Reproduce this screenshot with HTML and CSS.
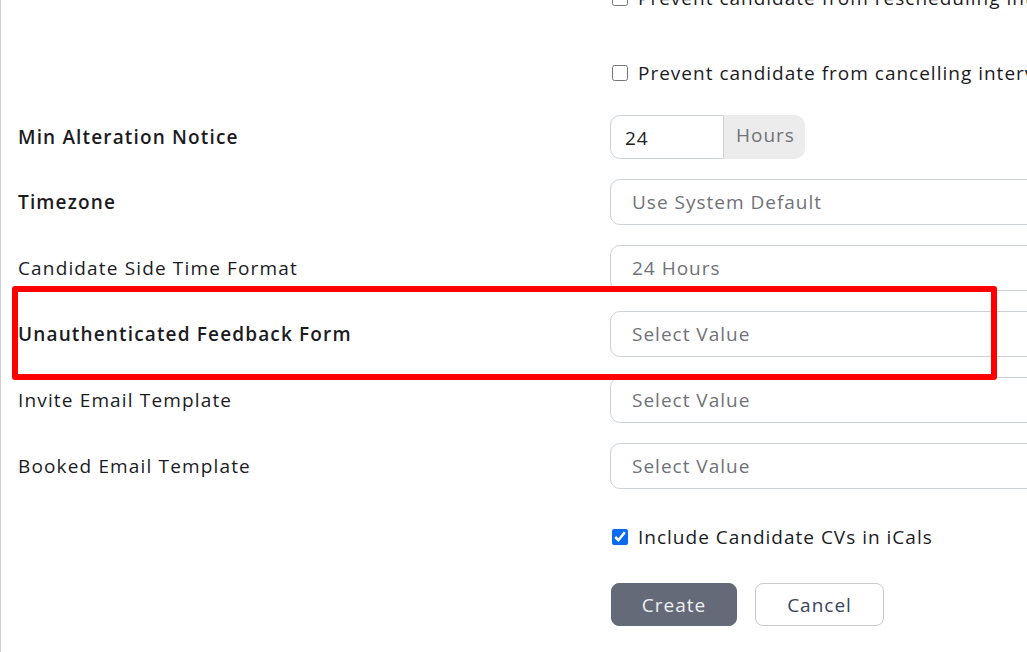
FILE: index.html
```html
<!DOCTYPE html>
<html lang="en">
<head>
<meta charset="utf-8">
<title>Interview settings</title>
<link rel="stylesheet" href="styles.css">
</head>
<body>
<div class="page">
  <form class="form">
    <div class="row check-row">
      <div class="label"></div>
      <label class="check"><input type="checkbox"><span>Prevent candidate from rescheduling interviews</span></label>
    </div>
    <div class="row check-row spaced">
      <div class="label"></div>
      <label class="check"><input type="checkbox"><span>Prevent candidate from cancelling interviews</span></label>
    </div>
    <div class="row group-row">
      <div class="label strong">Min Alteration Notice</div>
      <div class="input-group">
        <div class="input">24</div>
        <div class="addon">Hours</div>
      </div>
    </div>
    <div class="row select-row">
      <div class="label strong">Timezone</div>
      <div class="select">Use System Default</div>
    </div>
    <div class="row select-row">
      <div class="label">Candidate Side Time Format</div>
      <div class="select">24 Hours</div>
    </div>
    <div class="row select-row">
      <div class="label strong">Unauthenticated Feedback Form</div>
      <div class="select">Select Value</div>
    </div>
    <div class="row select-row">
      <div class="label">Invite Email Template</div>
      <div class="select">Select Value</div>
    </div>
    <div class="row select-row">
      <div class="label">Booked Email Template</div>
      <div class="select">Select Value</div>
    </div>
    <div class="row check-row cv-row">
      <div class="label"></div>
      <label class="check"><input type="checkbox" checked><span>Include Candidate CVs in iCals</span></label>
    </div>
    <div class="row button-row">
      <div class="label"></div>
      <div class="buttons">
        <button type="button" class="btn btn-primary">Create</button>
        <button type="button" class="btn btn-outline">Cancel</button>
      </div>
    </div>
  </form>
  <div class="highlight"></div>
</div>
</body>
</html>
```

FILE: styles.css
```css
html, body {
  margin: 0;
  padding: 0;
  background: #ffffff;
}

body {
  width: 1027px;
  height: 652px;
  overflow: hidden;
  font-family: "Open Sans", "Noto Sans", sans-serif;
  color: #1b1b1f;
}

.page {
  position: relative;
  height: 652px;
  border-left: 1px solid #cfcfcf;
  padding-left: 17px;
  overflow: hidden;
}

.form {
  display: flex;
  flex-direction: column;
  gap: 20px;
  margin-top: -24px;
}

.row {
  display: grid;
  grid-template-columns: 592px 640px;
  align-items: center;
}

.label {
  font-size: 19px;
  font-weight: 500;
  letter-spacing: 1.15px;
  white-space: nowrap;
  color: #1b1b1f;
}

.label.strong {
  font-weight: 600;
}

.check-row {
  height: 44px;
}

.check-row.spaced {
  margin-top: 11px;
}

.cv-row {
  margin-top: 6px;
}

.check {
  display: flex;
  align-items: center;
  gap: 10px;
  font-size: 19px;
  font-weight: 500;
  letter-spacing: 1px;
  white-space: nowrap;
  color: #1b1b1f;
}

.check input {
  width: 16px;
  height: 16px;
  margin: 0 0 0 2px;
  accent-color: #0b6bf0;
}

.group-row {
  height: 44px;
}

.input-group {
  display: flex;
  height: 44px;
}

.input {
  box-sizing: border-box;
  width: 114px;
  height: 44px;
  border: 1px solid #cdd2d8;
  border-radius: 10px 0 0 10px;
  padding: 2px 14px 0;
  display: flex;
  align-items: center;
  font-size: 19px;
  letter-spacing: 1px;
  color: #222;
}

.addon {
  box-sizing: border-box;
  width: 81px;
  height: 44px;
  background: #ececec;
  border-radius: 0 10px 10px 0;
  padding: 0 12px 4px;
  display: flex;
  align-items: center;
  font-size: 19px;
  letter-spacing: 1px;
  color: #707379;
}

.select-row {
  height: 46px;
}

.select {
  box-sizing: border-box;
  height: 46px;
  width: 640px;
  border: 1px solid #cdd2d8;
  border-radius: 10px;
  padding: 0 21px;
  display: flex;
  align-items: center;
  font-size: 19px;
  letter-spacing: 1px;
  color: #6f7278;
  white-space: nowrap;
}

.button-row {
  margin-top: 4px;
  height: 43px;
}

.buttons {
  display: flex;
  gap: 18px;
  padding-left: 1px;
}

.btn {
  box-sizing: border-box;
  height: 43px;
  border-radius: 8px;
  font-family: inherit;
  font-size: 19px;
  letter-spacing: 1px;
  font-weight: 500;
  cursor: pointer;
}

.btn-primary {
  width: 126px;
  background: #646a77;
  border: 1px solid #646a77;
  color: #eef0f3;
}

.btn-outline {
  width: 129px;
  background: #ffffff;
  border: 1px solid #c9cbcf;
  color: #3a4463;
}

.highlight {
  position: absolute;
  left: 11px;
  top: 286px;
  width: 985px;
  height: 94px;
  box-sizing: border-box;
  border: 6px solid #ff0000;
  border-radius: 3px;
}
```
